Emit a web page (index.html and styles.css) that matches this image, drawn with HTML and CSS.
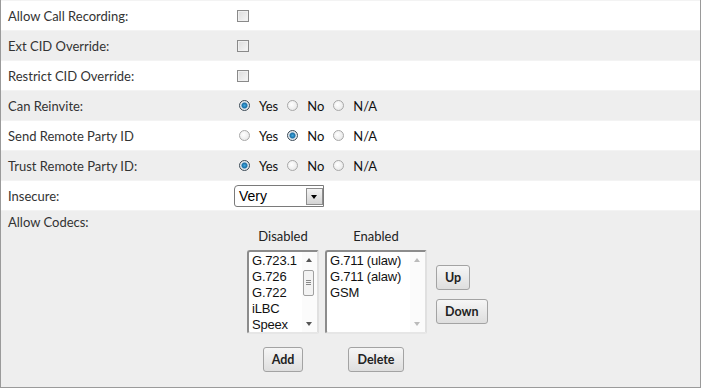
FILE: index.html
```html
<!DOCTYPE html>
<html lang="en">
<head>
  <meta charset="UTF-8">
  <title>Peer settings</title>
  <link rel="stylesheet" href="styles.css">
</head>
<body>
  <!-- Opciones del peer -->
  <div class="settings">
    <div class="row">
      <span class="label">Allow Call Recording:</span>
      <span class="field"><span class="check"></span></span>
    </div>
    <div class="row alt">
      <span class="label">Ext CID Override:</span>
      <span class="field"><span class="check"></span></span>
    </div>
    <div class="row">
      <span class="label">Restrict CID Override:</span>
      <span class="field"><span class="check"></span></span>
    </div>
    <div class="row alt">
      <span class="label">Can Reinvite:</span>
      <span class="field">
        <span class="radio on"></span><span class="opt">Yes</span>
        <span class="radio"></span><span class="opt">No</span>
        <span class="radio"></span><span class="opt">N/A</span>
      </span>
    </div>
    <div class="row">
      <span class="label">Send Remote Party ID</span>
      <span class="field">
        <span class="radio"></span><span class="opt">Yes</span>
        <span class="radio on"></span><span class="opt">No</span>
        <span class="radio"></span><span class="opt">N/A</span>
      </span>
    </div>
    <div class="row alt">
      <span class="label">Trust Remote Party ID:</span>
      <span class="field">
        <span class="radio on"></span><span class="opt">Yes</span>
        <span class="radio"></span><span class="opt">No</span>
        <span class="radio"></span><span class="opt">N/A</span>
      </span>
    </div>
    <div class="row">
      <span class="label">Insecure:</span>
      <span class="field">
        <span class="select">Very<span class="drop"></span></span>
      </span>
    </div>
    <div class="row alt codecs-row">
      <span class="label">Allow Codecs:</span>
      <div class="codecs">
        <span class="head">Disabled</span>
        <span class="head">Enabled</span>
        <span></span>
        <div class="listbox small">
          <div class="items">
            <div>G.723.1</div>
            <div>G.726</div>
            <div>G.722</div>
            <div>iLBC</div>
            <div>Speex</div>
          </div>
          <div class="scroll">
            <span class="arrow up"></span>
            <span class="thumb"></span>
            <span class="arrow down"></span>
          </div>
        </div>
        <div class="listbox wide">
          <div class="items">
            <div>G.711 (ulaw)</div>
            <div>G.711 (alaw)</div>
            <div>GSM</div>
          </div>
          <div class="scroll faint">
            <span class="arrow up"></span>
            <span class="arrow down"></span>
          </div>
        </div>
        <div class="side">
          <button class="btn">Up</button>
          <button class="btn">Down</button>
        </div>
        <div class="under"><button class="btn">Add</button></div>
        <div class="under"><button class="btn">Delete</button></div>
      </div>
    </div>
  </div>
</body>
</html>
```

FILE: styles.css
```css
/* Estilos básicos */
body {
  margin: 0;
  padding: 0;
  background: #fff;
  font-family: Lato, "Open Sans", Arial, sans-serif;
  font-size: 13px;
  color: #333;
}

.settings {
  width: 701px;
  box-sizing: border-box;
  border: 1px solid #9a9a9a;
  border-top: none;
}

.row {
  display: flex;
  align-items: center;
  height: 30px;
  padding-left: 7px;
  border-top: 1px solid #f3f3f3;
  box-sizing: border-box;
  background: #fff;
}

.row.alt {
  background: #eeeeee;
}

.label {
  width: 226px;
  flex: none;
}

.field {
  display: flex;
  align-items: center;
}

/* casillas */
.check {
  width: 10px;
  height: 10px;
  margin-left: 3px;
  border: 1px solid #8a8a8a;
  background: linear-gradient(135deg, #dcdcdc, #f6f6f6);
  box-shadow: inset 0 0 0 1px #f0f0f0;
}

.radio {
  width: 9px;
  height: 9px;
  margin: 0 9px 0 5px;
  border: 1px solid #a8a8a8;
  border-radius: 50%;
  background: radial-gradient(circle at 40% 40%, #fff, #e2e2e2);
}

.radio.on {
  border-color: #3c4a56;
  background: radial-gradient(circle, #3fa9e0 0, #1b6fa6 2.5px, #dfe6ec 3.5px, #f4f4f4 100%);
}

.opt {
  color: #111;
  margin-right: 4px;
}

.select {
  position: relative;
  width: 90px;
  height: 22px;
  box-sizing: border-box;
  border: 1px solid #7a7a7a;
  border-top-left-radius: 4px;
  border-bottom-left-radius: 3px;
  background: #fff;
  font-family: "Liberation Sans", Arial, sans-serif;
  font-size: 14px;
  color: #000;
  line-height: 20px;
  padding-left: 4px;
}

.drop {
  position: absolute;
  right: 0;
  top: 2px;
  width: 15px;
  height: 15px;
  border: 1px solid #8e8e8e;
  background: linear-gradient(#f4f4f4, #d4d4d4);
}

.drop::after {
  content: "";
  position: absolute;
  left: 4px;
  top: 6px;
  border: 3.5px solid transparent;
  border-top: 4px solid #000;
}

/* codecs */
.codecs-row {
  height: 177px;
  align-items: flex-start;
  padding-top: 3px;
}

.codecs {
  display: grid;
  grid-template-columns: 72px 102px auto;
  column-gap: 6px;
  margin-left: 13px;
  margin-top: 14px;
}

.head {
  text-align: center;
  color: #222;
  line-height: 17px;
  margin-bottom: 5px;
}

.listbox {
  display: flex;
  height: 84px;
  box-sizing: border-box;
  background: #fff;
  border: 2px solid #8c8c8c;
  border-right-color: #e0e0e0;
  border-bottom-color: #e6e6e6;
  border-radius: 3px 2px 2px 3px;
  font-family: "Liberation Sans", Arial, sans-serif;
  font-size: 13px;
  letter-spacing: -0.2px;
  color: #111;
}

.items {
  flex: 1;
  padding: 1px 0 0 3px;
  line-height: 16px;
  white-space: nowrap;
  overflow: hidden;
}

.scroll {
  position: relative;
  width: 15px;
  flex: none;
  background: #fbfbfb;
}

.arrow {
  position: absolute;
  left: 4px;
  border: 3px solid transparent;
}

.arrow.up {
  top: 3px;
  border-bottom: 4px solid #555;
}

.arrow.down {
  bottom: 3px;
  border-top: 4px solid #555;
}

.faint .arrow.up {
  border-bottom-color: #bbb;
}

.faint .arrow.down {
  border-top-color: #bbb;
}

.thumb {
  position: absolute;
  left: 1px;
  top: 18px;
  width: 9px;
  height: 24px;
  border: 1px solid #a0a0a0;
  border-radius: 2px;
  background: repeating-linear-gradient(#f3f3f3 0, #f3f3f3 9px, #888 9px, #888 10px, #f3f3f3 10px, #f3f3f3 11px, #888 11px, #888 12px, #f3f3f3 12px, #f3f3f3 13px, #888 13px, #888 14px, #f3f3f3 14px, #f3f3f3 24px);
  background-size: 5px 24px;
  background-repeat: no-repeat;
  background-position: center;
  background-color: #f3f3f3;
}

.side {
  display: flex;
  flex-direction: column;
  align-items: flex-start;
  gap: 9px;
  margin-left: 3px;
  padding-top: 15px;
}

.under {
  display: flex;
  justify-content: center;
  padding-top: 13px;
}

.btn {
  height: 25px;
  padding: 0 8px;
  border: 1px solid #a3a3a3;
  border-radius: 3px;
  background: linear-gradient(#f6f6f6, #dedede);
  font-family: Lato, "Open Sans", Arial, sans-serif;
  font-size: 12.5px;
  font-weight: 700;
  color: #222;
}
```
